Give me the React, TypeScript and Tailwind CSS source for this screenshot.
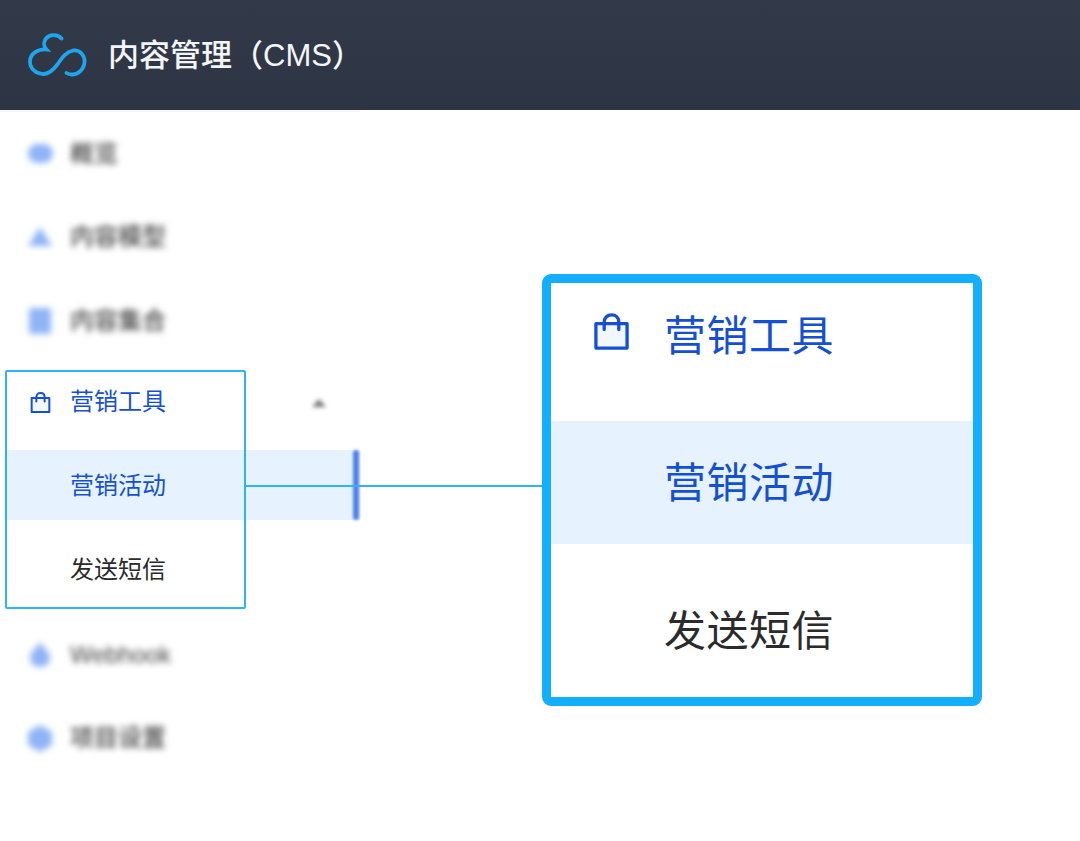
const fontClass = "font-['Liberation_Sans','Noto_Sans_CJK_SC',sans-serif]";

function CloudLogo() {
  return (
    <svg width="60" height="46" viewBox="0 0 60 46" fill="none" className="shrink-0">
      <path
        d="M33.5 6.5C30 2.5 22 1.500 18 6.500C15 10.500 16 15 18.500 17.500C10 17 2.500 21 2 29C1.600 37 9 42.500 16 42C22 41.600 25.500 37.500 29 33C33 27.500 37 20 45 18.500C52 17.500 57 23.500 56.500 30C56 37.500 50 42.500 44 42.500C42 42.500 40 42 38.500 41"
        stroke="#1fa5ec"
        strokeWidth="3.8"
        strokeLinecap="round"
      />
    </svg>
  );
}

function BagIcon({ size, stroke }: { size: number; stroke: number }) {
  return (
    <svg width={size} height={size} viewBox="0 0 36 38" fill="none" className="shrink-0">
      <path d="M2 11H34V36H2V11Z" fill="#f2f7fe" stroke="#1550d2" strokeWidth={stroke} strokeLinejoin="round" />
      <path
        d="M10.500 17V9.500C10.500 5 13.500 2 18 2C22.500 2 25.500 5 25.500 9.500V17"
        stroke="#1550d2"
        strokeWidth={stroke}
        strokeLinecap="round"
      />
    </svg>
  );
}

const eyeIcon = <div className="h-[19px] w-[25px] rounded-full bg-[#8fb4f5]" />;
const triangleIcon = (
  <svg width="26" height="22" viewBox="0 0 26 22">
    <path d="M13 1L25 20H1L13 1Z" fill="#8fb4f5" />
  </svg>
);
const bookIcon = <div className="h-[26px] w-[22px] rounded-[2px] bg-[#8fb4f5]" />;
const dropIcon = (
  <svg width="22" height="27" viewBox="0 0 22 27">
    <path d="M11 1C14 6 21 11 21 17C21 23 16 26 11 26C6 26 1 23 1 17C1 11 8 6 11 1Z" fill="#8fb4f5" />
  </svg>
);
const hexIcon = (
  <svg width="26" height="27" viewBox="0 0 26 27">
    <path d="M13 0L25 7V20L13 27L1 20V7L13 0Z" fill="#8fb4f5" />
  </svg>
);

function BlurRow({ icon, label }: { icon: React.ReactNode; label: string }) {
  return (
    <div className="flex h-[83.5px] items-center pl-[26px] text-[24px] font-medium text-[#444] blur-[3px]">
      <div className="flex w-[28px] justify-center">{icon}</div>
      <span className="ml-[16px]">{label}</span>
    </div>
  );
}

export default function App() {
  return (
    <div className={`relative flex min-h-[841px] flex-col bg-white ${fontClass}`}>
      <header className="flex h-[110px] items-center bg-gradient-to-b from-[#323a49] to-[#2d3444] pl-[28px]">
        <CloudLogo />
        <h1 className="mt-[1px] ml-[20px] text-[31px] leading-none font-medium text-[#f4f5f7]">内容管理（CMS）</h1>
      </header>

      <div className="flex flex-1">
        <aside className="w-[360px]">
          <div className="h-[2px] bg-[#f7f7f9]" />
          <BlurRow icon={eyeIcon} label="概览" />
          <BlurRow icon={triangleIcon} label="内容模型" />
          <BlurRow icon={bookIcon} label="内容集合" />

          <div className="relative">
            <div className="flex h-[83.5px] items-center pb-[4px]">
              <div className="flex w-[246px] items-center pl-[26px] text-[24px] text-[#1550d2]">
                <div className="flex w-[28px] justify-center">
                  <BagIcon size={21} stroke={3.6} />
                </div>
                <span className="ml-[16px]">营销工具</span>
              </div>
              <svg width="16" height="10" viewBox="0 0 16 10" className="mt-[2px] ml-[65px] blur-[2px]">
                <path d="M8 1L15 9H1L8 1Z" fill="#777" />
              </svg>
            </div>
            <div className="flex h-[83.5px] items-start pt-[4px]">
              <div className="ml-[6px] flex h-[70px] w-[240px] items-center bg-[#e6f3fe] pt-[2px] pl-[64px] text-[24px] text-[#1550d2]">
                营销活动
              </div>
              <div className="relative h-[70px] flex-1 overflow-visible bg-[#e6f3fe]">
                <div className="absolute top-0 right-[1px] bottom-0 w-[6px] rounded-full bg-[#4f7fe6] blur-[1.500px]" />
              </div>
            </div>
            <div className="flex h-[83.5px] items-center pb-[2px] pl-[70px] text-[24px] text-[#2b2b2b]">发送短信</div>

            <div className="pointer-events-none absolute top-[7.500px] left-[5px] h-[238.500px] w-[241px] rounded-[2px] border-2 border-[#2eb3f5]" />
          </div>

          <BlurRow icon={dropIcon} label="Webhook" />
          <BlurRow icon={hexIcon} label="项目设置" />
        </aside>
      </div>

      <div className="absolute top-[485px] left-[246px] h-[2px] w-[296px] bg-[#2eb3f5]" />

      <div className="absolute top-[274px] left-[542px] w-[440px] overflow-hidden rounded-[9px] border-[9px] border-[#14aeff] bg-white">
        <div className="flex h-[138px] items-start pt-[30px] pl-[42px] text-[42px] leading-[48px] tracking-[0.5px] text-[#1550d2]">
          <BagIcon size={37} stroke={3.4} />
          <span className="ml-[34px]">营销工具</span>
        </div>
        <div className="flex h-[123px] items-center bg-[#e6f3fe] pt-[2px] pl-[113px] text-[42px] leading-[48px] tracking-[0.5px] text-[#1550d2]">
          营销活动
        </div>
        <div className="flex h-[153px] items-start pt-[64px] pl-[113px] text-[42px] leading-[48px] tracking-[0.5px] text-[#2b2b2b]">
          发送短信
        </div>
      </div>
    </div>
  );
}
